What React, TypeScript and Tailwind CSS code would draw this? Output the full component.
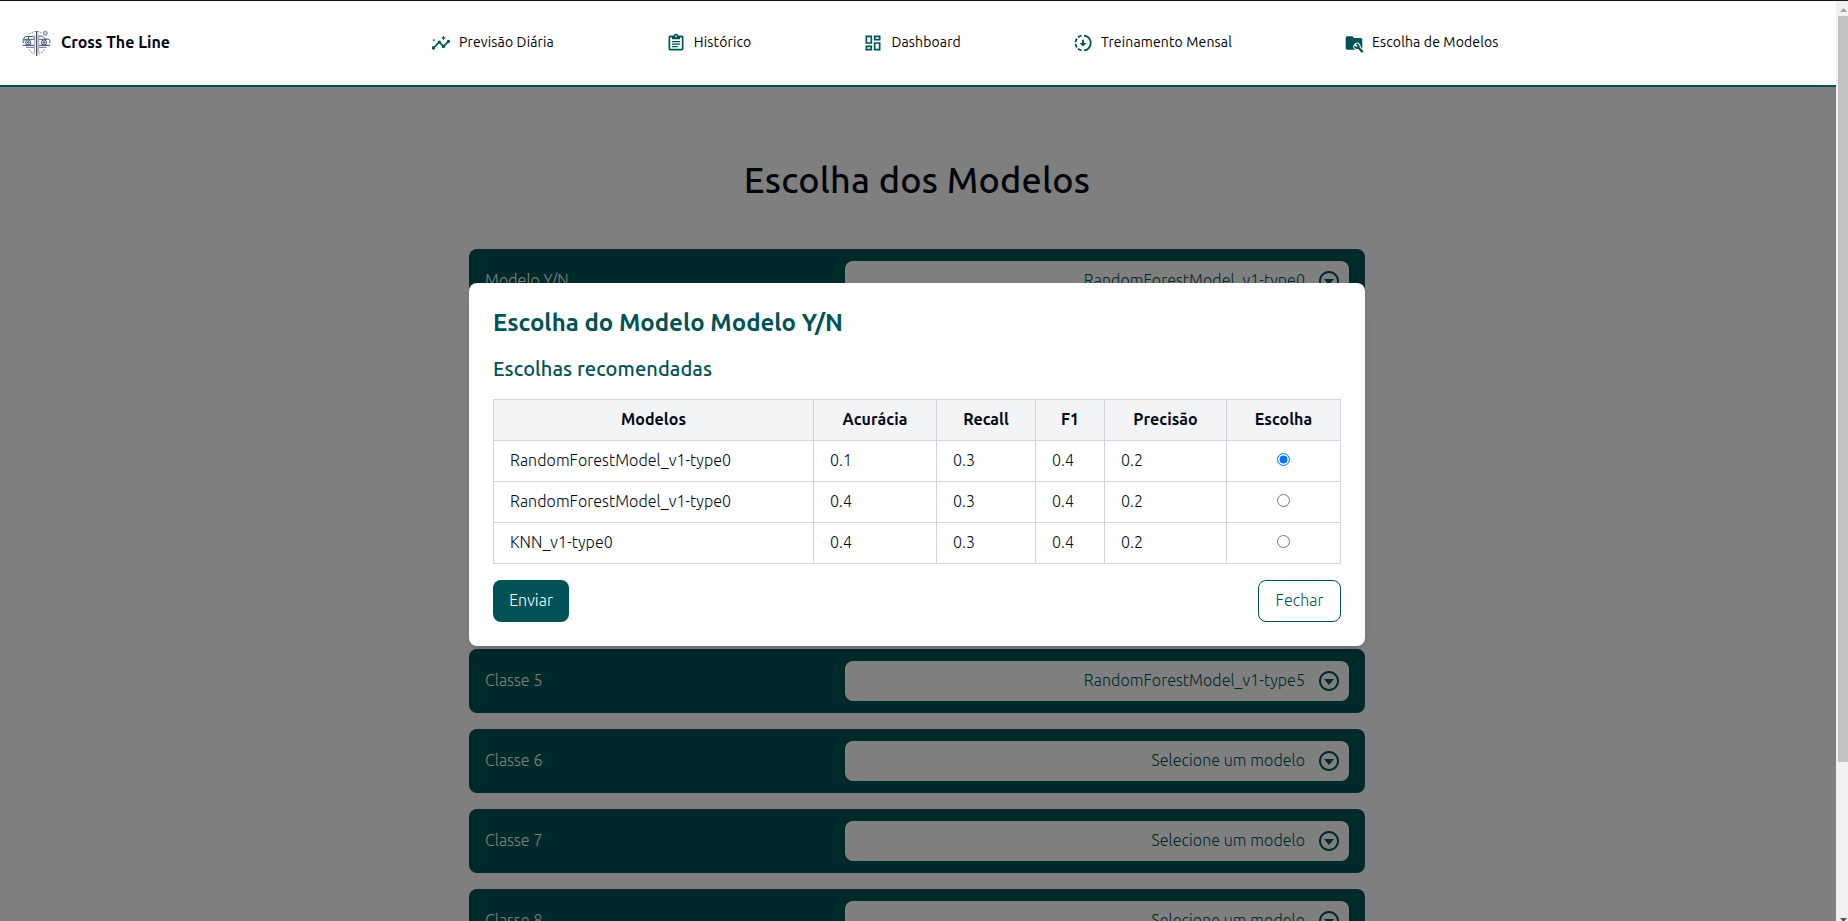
import { useState } from "react";
import type { ReactNode } from "react";
import { BiCaretDownCircle } from "react-icons/bi";
import { MdInsights, MdOutlineDashboard } from "react-icons/md";

function ClipboardIcon() {
  return (
    <svg viewBox="0 0 24 24" className="size-5" fill="currentColor">
      <path d="M19 3h-4.18C14.4 1.84 13.3 1 12 1s-2.4.84-2.82 2H5a2 2 0 0 0-2 2v14c0 1.1.9 2 2 2h14c1.1 0 2-.9 2-2V5a2 2 0 0 0-2-2zm-7-.2a1 1 0 1 1 0 2 1 1 0 0 1 0-2zM19 19H5V5h2v2.500h10V5h2v14z" />
      <path d="M7 9.500h10v1.600H7zM7 12.500h10v1.600H7zM7 15.500h7v1.600H7z" />
    </svg>
  );
}

function DownloadingIcon() {
  return (
    <svg viewBox="0 0 24 24" className="size-5" fill="none" stroke="currentColor" strokeWidth="2.200">
      <path d="M13.200 3.050a9 9 0 0 1 0 17.900" />
      <circle
        cx="12"
        cy="12"
        r="9"
        pathLength="360"
        strokeDasharray="30 12 30 12 30 12 30 204"
        strokeDashoffset="-102"
      />
      <path d="M12 8v5" />
      <path d="M7.800 12h8.400L12 16.300z" fill="currentColor" stroke="none" />
    </svg>
  );
}

function FolderWrenchIcon() {
  const wrench =
    "m22.7 19-9.1-9.1c.9-2.3.4-5-1.5-6.9-2-2-5-2.4-7.4-1.3L9 6 6 9 1.6 4.7C.4 7.1.9 10.1 2.9 12.1c1.9 1.9 4.6 2.4 6.9 1.5l9.1 9.1c.4.4 1 .4 1.4 0l2.3-2.3c.5-.4.5-1.1.1-1.4z";
  return (
    <svg viewBox="0 0 24 24" className="size-5 overflow-visible" fill="currentColor">
      <path d="M10 4H4c-1.1 0-2 .9-2 2v12c0 1.1.9 2 2 2h16a2 2 0 0 0 2-2V8a2 2 0 0 0-2-2h-8l-2-2z" />
      <g transform="translate(11.8 12.2) scale(.5)">
        <path d={wrench} fill="#fff" stroke="#fff" strokeWidth="5" strokeLinejoin="round" />
        <path d={wrench} />
      </g>
    </svg>
  );
}

function Logo() {
  return (
    <svg viewBox="0 0 32 32" className="size-8" fill="none" stroke="#475569" strokeWidth="1">
      <path d="M9 7.500Q13 4.300 16.700 4.500Q20 4.500 23 7" strokeDasharray="2 1" strokeWidth=".7" />
      <circle cx="25.300" cy="6.300" r="2" strokeWidth=".9" stroke="#64748b" fill="#cbd5e1" />
      <path d="M3.200 16v-3.500l2-3h8l2 2.500M3.500 12.300h11M8.500 9.500v3" />
      <path d="M18.500 9.200h4l3 3h3.500l.8 1.300v2.500M18.500 12.300h8" />
      <circle cx="8.300" cy="15.500" r="2.600" fill="#cbd5e1" />
      <circle cx="24" cy="15.500" r="2.600" fill="#cbd5e1" />
      <circle cx="8.300" cy="15.500" r=".7" />
      <circle cx="24" cy="15.500" r=".7" />
      <path d="M2.700 18.300h11.500M19 18.300h11.300" stroke="#334155" />
      <path d="M6 20.300h8.200M19 20.300h7.500" stroke="#64748b" />
      <path d="M14.700 8v18M18.700 8v18" stroke="#94a3b8" />
      <path d="M16.700 4v25" stroke="#334155" strokeWidth="1.200" />
      <path d="M9 22.500q2 3 5.500 4.500M24.500 22.500q-2 3-5.500 4.500" strokeDasharray="2 1" strokeWidth=".8" />
      <path d="M3.500 13.300h2" stroke="#06b6d4" />
    </svg>
  );
}

const navItems: { label: string; icon: ReactNode }[] = [
  { label: "Previsão Diária", icon: <MdInsights size={20} /> },
  { label: "Histórico", icon: <ClipboardIcon /> },
  { label: "Dashboard", icon: <MdOutlineDashboard size={20} /> },
  { label: "Treinamento Mensal", icon: <DownloadingIcon /> },
  { label: "Escolha de Modelos", icon: <FolderWrenchIcon /> },
];

const classes = [
  { name: "Modelo Y/N", model: "RandomForestModel_v1-type0" },
  { name: "Classe 1", model: "RandomForestModel_v1-type1" },
  { name: "Classe 2", model: "RandomForestModel_v1-type2" },
  { name: "Classe 3", model: "RandomForestModel_v1-type3" },
  { name: "Classe 4", model: "RandomForestModel_v1-type4" },
  { name: "Classe 5", model: "RandomForestModel_v1-type5" },
  { name: "Classe 6", model: "Selecione um modelo" },
  { name: "Classe 7", model: "Selecione um modelo" },
  { name: "Classe 8", model: "Selecione um modelo" },
];

const columns = [
  { label: "Modelos", width: "w-[320px]" },
  { label: "Acurácia", width: "w-[123px]" },
  { label: "Recall", width: "w-[99px]" },
  { label: "F1", width: "w-[69px]" },
  { label: "Precisão", width: "w-[122px]" },
  { label: "Escolha", width: "w-[114px]" },
];

const models = [
  ["RandomForestModel_v1-type0", "0.1", "0.3", "0.4", "0.2"],
  ["RandomForestModel_v1-type0", "0.4", "0.3", "0.4", "0.2"],
  ["KNN_v1-type0", "0.4", "0.3", "0.4", "0.2"],
];

function Header() {
  return (
    <header className="flex h-[86px] shrink-0 items-center border-b-2 border-[#005257] bg-white pl-5">
      <div className="flex w-[411px] items-center gap-[9px]">
        <Logo />
        <span className="pb-0.5 font-semibold tracking-normal whitespace-nowrap">Cross The Line</span>
      </div>
      <nav className="flex items-center gap-28">
        {navItems.map((item) => (
          <a
            key={item.label}
            className="flex items-center gap-2 text-sm font-[450] tracking-[0.145px] whitespace-nowrap text-black"
          >
            <span className="text-[#005257]">{item.icon}</span>
            <span className="pb-0.5">{item.label}</span>
          </a>
        ))}
      </nav>
    </header>
  );
}

function ClassRow({ name, model }: { name: string; model: string }) {
  return (
    <div className="flex h-16 shrink-0 items-center justify-between rounded-lg bg-[#005257] px-4 text-white">
      <span className="pb-0.5">{name}</span>
      <div className="flex h-10 w-[504px] items-center justify-end gap-3 rounded-lg bg-white px-2 text-[#005257]">
        <span className="pb-0.5">{model}</span>
        <BiCaretDownCircle size={24} />
      </div>
    </div>
  );
}

function ModelDialog() {
  const [selected, setSelected] = useState(0);
  return (
    <div className="w-[896px] rounded-lg bg-white p-6 shadow-lg">
      <h2 className="mb-4 text-2xl font-[590] tracking-normal text-[#005257]">Escolha do Modelo Modelo Y/N</h2>
      <h3 className="mb-4 text-xl font-[530] tracking-[0.1px] text-[#005257]">Escolhas recomendadas</h3>
      <table className="mb-4 w-full table-fixed border-collapse border border-gray-300">
        <thead>
          <tr className="bg-gray-100">
            {columns.map((c) => (
              <th key={c.label} className={`${c.width} h-[41px] border border-gray-300 px-0 pt-0 pb-0.5 font-semibold`}>
                {c.label}
              </th>
            ))}
          </tr>
        </thead>
        <tbody>
          {models.map((row, i) => (
            <tr key={i}>
              {row.map((cell, j) => (
                <td key={j} className="h-[41px] border border-gray-300 px-4 pt-0 pb-0.5">
                  {cell}
                </td>
              ))}
              <td className="h-[41px] border border-gray-300 px-0 pt-0 pb-0.5 text-center leading-6">
                <input type="radio" name="model" checked={selected === i} onChange={() => setSelected(i)} />
              </td>
            </tr>
          ))}
        </tbody>
      </table>
      <div className="flex justify-between">
        <button className="h-[42px] w-[76px] rounded-lg bg-[#005257] pb-0.5 text-white">Enviar</button>
        <button className="h-[42px] w-[83px] rounded-lg border border-[#005257] pb-0.5 text-[#005257]">
          Fechar
        </button>
      </div>
    </div>
  );
}

function ScrollBar() {
  return (
    <div className="flex w-3 shrink-0 flex-col bg-[#f1f1f1] pl-0.5">
      <div className="flex h-[15px] items-center justify-center pt-0.5">
        <svg viewBox="0 0 7 4" className="h-1 w-[7px]" fill="#a3a3a3">
          <path d="M0 4L3.500 0L7 4z" />
        </svg>
      </div>
      <div className="h-[746px] bg-[#c1c1c1]" />
      <div className="mt-auto flex h-[3px] justify-center overflow-hidden">
        <svg viewBox="0 0 7 4" className="h-1 w-[7px] shrink-0" fill="#505050">
          <path d="M0 0H7L3.500 4z" />
        </svg>
      </div>
    </div>
  );
}

export default function App() {
  return (
    <div className="flex h-[921px] w-full overflow-hidden border-t border-[#171717] bg-white font-[Ubuntu,'Noto_Sans',sans-serif] font-[350] tracking-[0.06px] text-[#020817]">
      <div className="flex min-w-0 flex-1 flex-col">
        <Header />
        <main className="relative min-h-0 flex-1 overflow-hidden pr-0.5">
          <div className="mx-auto flex w-[896px] flex-col gap-4 pt-[73px]">
            <h1 className="mb-[33px] text-center text-4xl leading-10 font-[550] tracking-[0.2px]">
              Escolha dos Modelos
            </h1>
            {classes.map((c) => (
              <ClassRow key={c.name} name={c.name} model={c.model} />
            ))}
          </div>
          <div className="absolute inset-0 flex items-start justify-center bg-black/50 pt-[196px] pr-0.5">
            <ModelDialog />
          </div>
        </main>
      </div>
      <ScrollBar />
    </div>
  );
}
